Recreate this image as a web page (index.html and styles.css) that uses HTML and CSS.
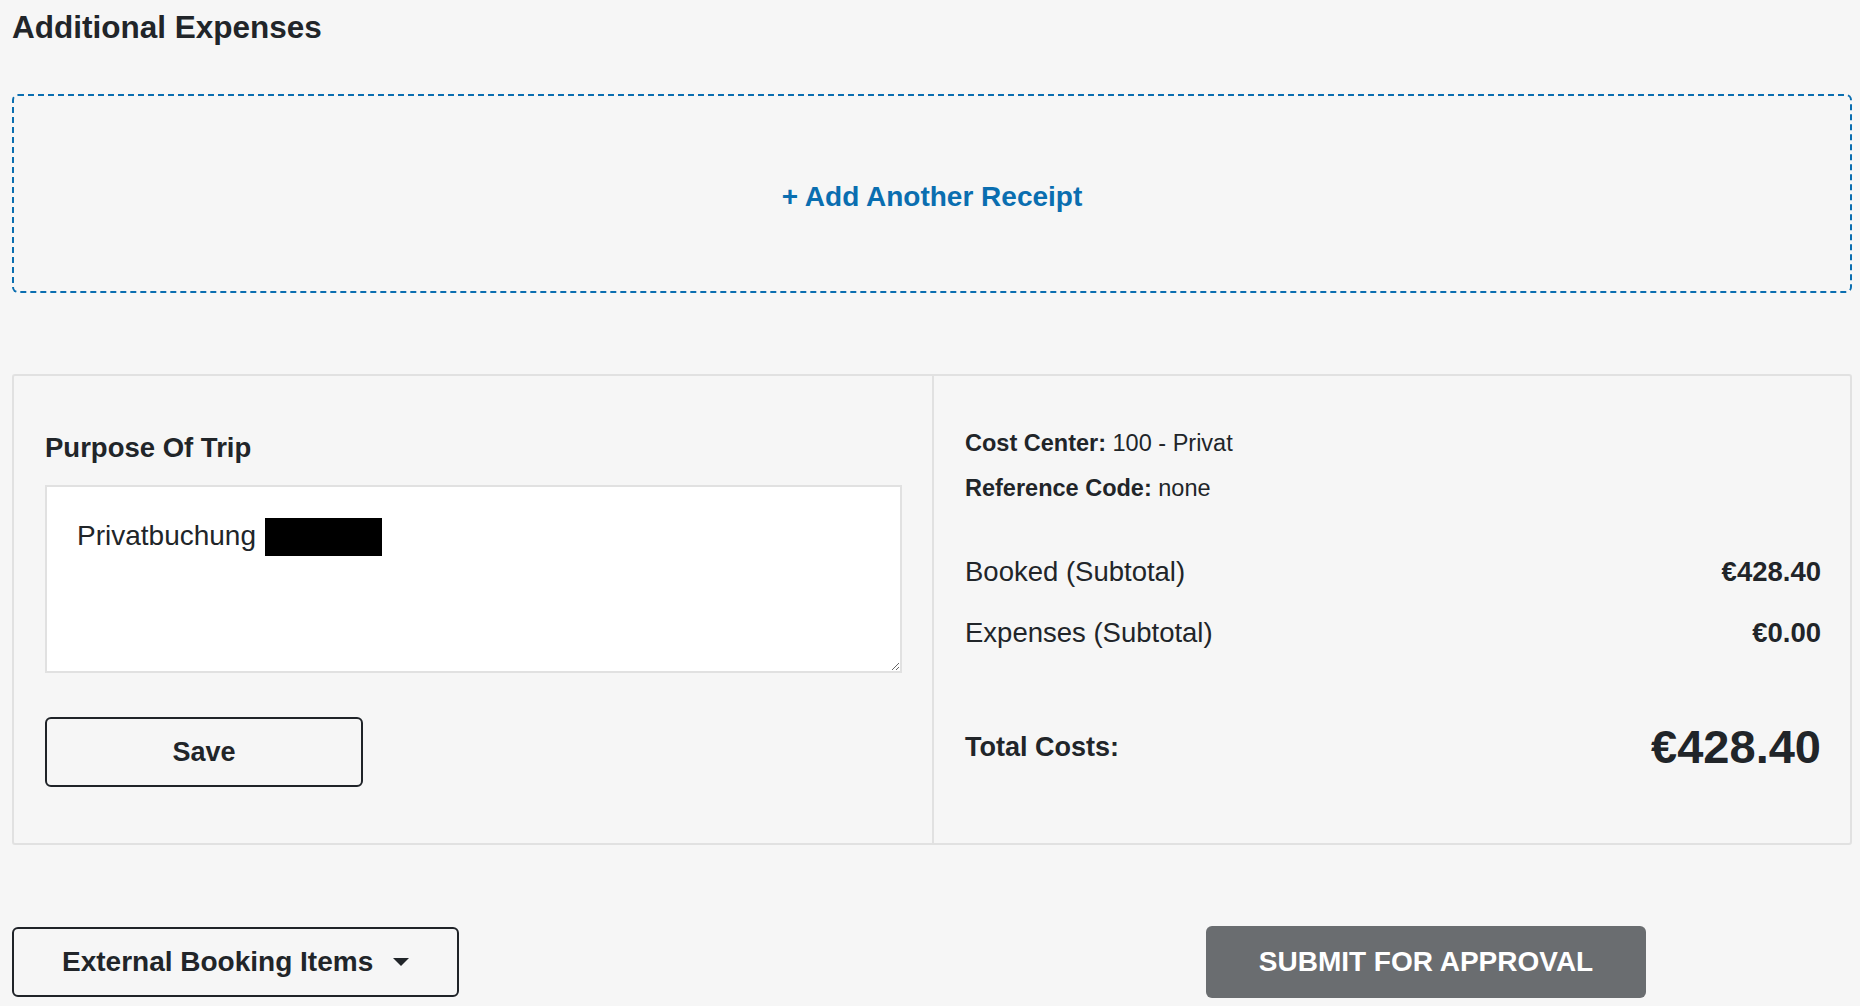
FILE: index.html
```html
<!DOCTYPE html>
<html lang="en">
<head>
  <meta charset="UTF-8">
  <title>Additional Expenses</title>
  <link rel="stylesheet" href="styles.css">
</head>
<body>

  <div class="page">
    <h2 class="section-title">Additional Expenses</h2>

    <div class="add-receipt">
      <a href="#" class="add-link">+ Add Another Receipt</a>
    </div>

    <div class="summary">
      <div class="purpose">
        <label for="purpose" class="purpose-label">Purpose Of Trip</label>
        <div class="purpose-field">
          <textarea id="purpose">Privatbuchung</textarea>
          <span class="redacted"></span>
        </div>
        <button type="button" class="btn-outline btn-save">Save</button>
      </div>

      <div class="costs">
        <p class="meta"><b>Cost Center:</b> 100 - Privat</p>
        <p class="meta"><b>Reference Code:</b> none</p>

        <div class="cost-row subtotal">
          <span>Booked (Subtotal)</span>
          <b>€428.40</b>
        </div>
        <div class="cost-row subtotal">
          <span>Expenses (Subtotal)</span>
          <b>€0.00</b>
        </div>

        <div class="cost-row total">
          <b class="total-label">Total Costs:</b>
          <b class="total-value">€428.40</b>
        </div>
      </div>
    </div>

    <div class="actions">
      <button type="button" class="btn-outline btn-external">External Booking Items <span class="caret"></span></button>
      <button type="button" class="btn-submit">SUBMIT FOR APPROVAL</button>
    </div>
  </div>

</body>
</html>
```

FILE: styles.css
```css
body {
  margin: 0;
  background-color: #f6f6f6;
  color: #212529;
  font-family: "Liberation Sans", Arial, sans-serif;
}

.page {
  padding: 9px 8px 0 12px;
}

.section-title {
  margin: 0;
  font-size: 31.5px;
  line-height: 37px;
  font-weight: bold;
}

.add-receipt {
  margin-top: 48px;
  height: 199px;
  box-sizing: border-box;
  padding-top: 6px;
  border: 2px dashed #0a6eb0;
  border-radius: 6px;
  display: flex;
  align-items: center;
  justify-content: center;
}

.add-link {
  color: #0a6eb0;
  font-size: 28px;
  line-height: 32px;
  font-weight: bold;
  text-decoration: none;
}

.summary {
  margin-top: 81px;
  display: grid;
  grid-template-columns: 1fr 1fr;
  border: 2px solid #e1e1e1;
  border-radius: 3px;
}

.purpose {
  padding: 56px 30px 56px 31px;
}

.purpose-label {
  display: block;
  font-size: 27.5px;
  line-height: 32px;
  font-weight: bold;
  margin-bottom: 21px;
}

.purpose-field {
  position: relative;
}

.purpose-field textarea {
  display: block;
  width: 100%;
  height: 188px;
  box-sizing: border-box;
  padding: 33px 30px;
  border: 2px solid #e1e1e1;
  border-radius: 0;
  background-color: #fff;
  color: #212529;
  font-family: "Liberation Sans", Arial, sans-serif;
  font-size: 28px;
  line-height: 32px;
  resize: vertical;
}

.redacted {
  position: absolute;
  left: 220px;
  top: 33px;
  width: 117px;
  height: 38px;
  background-color: #000;
}

.btn-outline {
  background-color: transparent;
  border: 2px solid #1f2328;
  border-radius: 6px;
  color: #212529;
  font-family: "Liberation Sans", Arial, sans-serif;
  font-weight: bold;
  cursor: pointer;
}

.btn-save {
  display: block;
  margin-top: 44px;
  width: 318px;
  height: 70px;
  font-size: 27px;
}

.costs {
  border-left: 2px solid #e1e1e1;
  padding: 50px 29px 40px 31px;
}

.meta {
  margin: 0 0 10px;
  font-size: 23.5px;
  line-height: 35px;
}

.cost-row {
  display: flex;
  justify-content: space-between;
  align-items: center;
}

.subtotal {
  font-size: 27.5px;
  line-height: 40px;
  margin-bottom: 21px;
}

.subtotal:first-of-type {
  margin-top: 46px;
}

.cost-row.total {
  margin-top: 66px;
}

.total-label {
  font-size: 27px;
  line-height: 40px;
}

.total-value {
  font-size: 47px;
  line-height: 56px;
}

.actions {
  margin-top: 81px;
  display: flex;
  justify-content: space-between;
  align-items: center;
}

.btn-external {
  width: 447px;
  height: 70px;
  font-size: 28px;
}

.caret {
  display: inline-block;
  margin-left: 12px;
  vertical-align: 5px;
  border-top: 8px solid #212529;
  border-left: 8.5px solid transparent;
  border-right: 8.5px solid transparent;
}

.btn-submit {
  margin-right: 206px;
  width: 440px;
  height: 72px;
  border: none;
  border-radius: 6px;
  background-color: #6a6d70;
  color: #fff;
  font-family: "Liberation Sans", Arial, sans-serif;
  font-size: 28px;
  font-weight: bold;
  cursor: pointer;
}
```
